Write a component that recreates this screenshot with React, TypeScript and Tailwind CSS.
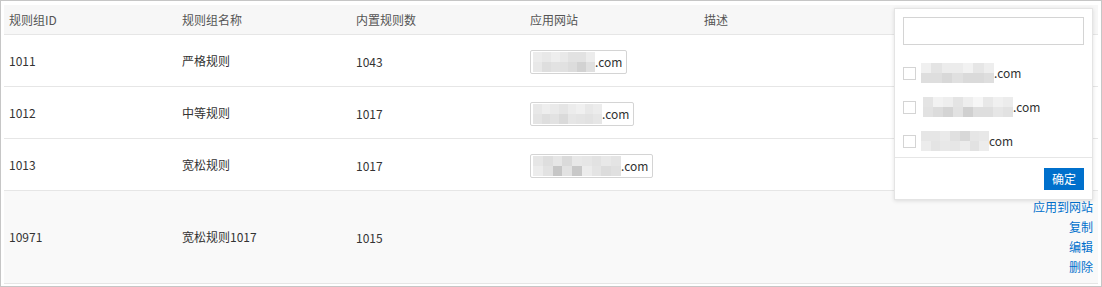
import React from "react";

type RuleGroup = {
  id: string;
  name: string;
  count: string;
  site?: number[][];
  siteWidth?: number;
};

const FONT = { fontFamily: '"Noto Sans CJK SC", "Noto Sans", sans-serif' };

const rows: RuleGroup[] = [
  {
    id: "1011",
    name: "严格规则",
    count: "1043",
    siteWidth: 62,
    site: [
      [236, 232, 238, 233, 226, 226, 236],
      [232, 222, 226, 225, 220, 210, 224],
    ],
  },
  {
    id: "1012",
    name: "中等规则",
    count: "1017",
    siteWidth: 69,
    site: [
      [232, 238, 234, 229, 236, 240, 232, 236],
      [228, 222, 226, 218, 230, 228, 226, 230],
    ],
  },
  {
    id: "1013",
    name: "宽松规则",
    count: "1017",
    siteWidth: 88,
    site: [
      [230, 222, 230, 218, 232, 230, 226, 232, 228],
      [236, 226, 198, 226, 200, 236, 228, 220, 224],
    ],
  },
  { id: "10971", name: "宽松规则1017", count: "1015" },
];

const popupSites: { cells: number[][]; width: number }[] = [
  {
    width: 73,
    cells: [
      [240, 228, 236, 236, 242, 230, 238],
      [222, 222, 216, 224, 218, 218, 222],
    ],
  },
  {
    width: 90,
    cells: [
      [228, 242, 238, 228, 238, 246, 232, 240, 236],
      [226, 220, 212, 226, 208, 222, 222, 230, 226],
    ],
  },
  {
    width: 68,
    cells: [
      [230, 230, 234, 224, 216, 230, 232],
      [236, 228, 232, 230, 236, 226, 236],
    ],
  },
];

function Blur({ cells, width }: { cells: number[][]; width: number }) {
  return (
    <div className="flex flex-col" style={{ width }}>
      {cells.map((line, r) => (
        <div key={r} className="flex">
          {line.map((v, c) => (
            <div
              key={c}
              className="h-[10px] flex-1"
              style={{ backgroundColor: `rgb(${v},${v},${v})` }}
            />
          ))}
        </div>
      ))}
    </div>
  );
}

function SiteTag({ cells, width }: { cells: number[][]; width: number }) {
  return (
    <div className="inline-flex h-[24px] items-center rounded-[2px] border border-[#d4d4d4] bg-white pl-[2px] pr-[4px]">
      <Blur cells={cells} width={width} />
      <span className="text-[12px] text-[#333]">.com</span>
    </div>
  );
}

export default function App() {
  return (
    <div className="h-[287px] w-[1102px] overflow-hidden bg-white" style={FONT}>
      <div className="relative h-full w-full border border-[#c6c6c6] pl-[3px] pr-[3px] pt-[4px]">
        <div className="w-[1094px] text-[12px] text-[#333]">
          <div className="flex h-[30px] items-center border-b border-[#e6e6e6] bg-[#f7f7f7] text-[#555]">
            <div className="w-[174px] pl-[5px]">规则组ID</div>
            <div className="w-[174px] pl-[4px]">规则组名称</div>
            <div className="w-[174px] pl-[4px]">内置规则数</div>
            <div className="w-[174px] pl-[4px]">应用网站</div>
            <div className="w-[174px] pl-[4px]">描述</div>
          </div>

          {rows.map((row) => (
            <div
              key={row.id}
              className={
                row.site
                  ? "flex h-[52px] items-center border-b border-[#e6e6e6]"
                  : "flex h-[93px] items-center border-b border-[#e6e6e6] bg-[#f9f9f9]"
              }
            >
              <div className="w-[174px] pl-[5px]">{row.id}</div>
              <div className="w-[174px] pl-[4px]">{row.name}</div>
              <div className="w-[174px] pl-[4px] pt-[2px]">{row.count}</div>
              <div className="w-[174px] pl-[4px]">
                {row.site ? <SiteTag cells={row.site} width={row.siteWidth ?? 60} /> : null}
              </div>
              <div className="w-[174px]" />
              {!row.site ? (
                <div className="flex flex-1 flex-col items-end pr-[5px] leading-[20px] text-[#0070cc]">
                  <span>应用到网站</span>
                  <span>复制</span>
                  <span>编辑</span>
                  <span>删除</span>
                </div>
              ) : null}
            </div>
          ))}
        </div>

        <div className="absolute left-[893px] top-[7px] w-[199px] border border-[#e4e4e4] bg-white shadow-[0_1px_4px_rgba(0,0,0,0.12)]">
          <div className="px-[8px] pt-[8px]">
            <div className="h-[28px] w-[181px] border border-[#d4d4d4]" />
          </div>
          <div className="flex flex-col gap-[14px] px-[8px] pb-[6px] pt-[18px]">
            {popupSites.map((site, i) => (
              <div key={i} className="flex items-center">
                <div className="h-[13px] w-[13px] border border-[#d4d4d4] bg-white" />
                <div className={i === 1 ? "ml-[7px]" : "ml-[5px]"}>
                  <Blur cells={site.cells} width={site.width} />
                </div>
                <span className="text-[12px] text-[#333]">{i === 2 ? "com" : ".com"}</span>
              </div>
            ))}
          </div>
          <div className="flex justify-end border-t border-[#e6e6e6] px-[8px] pb-[9px] pt-[10px]">
            <button
              type="button"
              className="h-[22px] w-[40px] bg-[#0070cc] text-[12px] text-white"
            >
              确定
            </button>
          </div>
        </div>
      </div>
    </div>
  );
}
